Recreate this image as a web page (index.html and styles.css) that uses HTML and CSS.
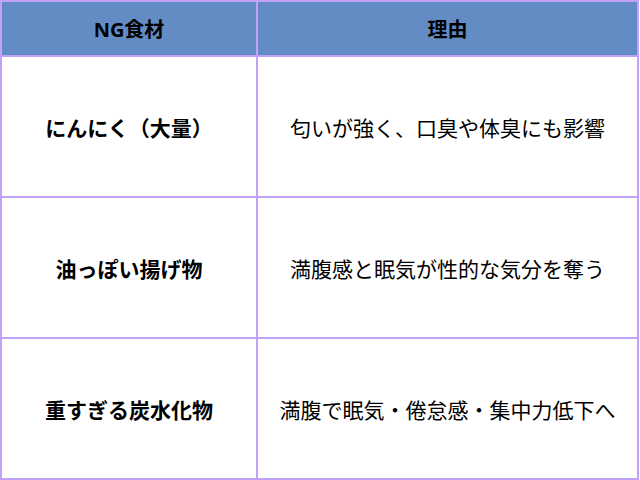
FILE: index.html
```html
<!DOCTYPE html>
<html lang="ja">
<head>
<meta charset="utf-8">
<link rel="stylesheet" href="styles.css">
</head>
<body>
<table class="ng-table">
  <thead>
    <tr>
      <th class="col-food">NG食材</th>
      <th class="col-reason">理由</th>
    </tr>
  </thead>
  <tbody>
    <tr>
      <td class="food">にんにく（大量）</td>
      <td class="reason">匂いが強く、口臭や体臭にも影響</td>
    </tr>
    <tr>
      <td class="food">油っぽい揚げ物</td>
      <td class="reason">満腹感と眠気が性的な気分を奪う</td>
    </tr>
    <tr>
      <td class="food">重すぎる炭水化物</td>
      <td class="reason">満腹で眠気・倦怠感・集中力低下へ</td>
    </tr>
  </tbody>
</table>
</body>
</html>
```
FILE: styles.css
```css
html, body {
  margin: 0;
  padding: 0;
  background: #ffffff;
}
body {
  width: 640px;
  height: 480px;
  font-family: "Noto Sans", "Noto Sans CJK JP", sans-serif;
  color: #000;
}
.ng-table {
  width: 639px;
  height: 479px;
  border-collapse: collapse;
  table-layout: fixed;
}
.ng-table th,
.ng-table td {
  border: 2px solid #c2a2f8;
  text-align: center;
  vertical-align: middle;
  padding: 0;
}
.ng-table th {
  background: #638cc4;
  font-weight: 700;
  font-size: 20px;
  height: 53px;
}
.col-food {
  width: 254px;
}
.ng-table td {
  height: 139px;
  font-size: 21px;
}
.food {
  font-weight: 700;
}
.reason {
  font-weight: 400;
}
```
